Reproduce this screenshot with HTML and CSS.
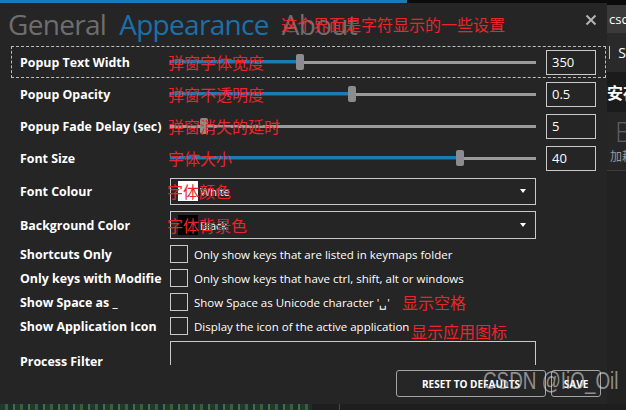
FILE: index.html
```html
<!DOCTYPE html>
<html>
<head>
<meta charset="utf-8">
<link rel="stylesheet" href="styles.css">
</head>
<body>
<div class="topbar"><div class="topbar-blue"></div></div>
<div class="main">
  <div class="dialog">
    <div class="header">
      <span class="tab">General</span>
      <span class="tab active">Appearance</span>
      <span class="tab">About</span>
      <span class="note note-header">这个界面是字符显示的一些设置</span>
      <svg class="close" width="12" height="12" viewBox="0 0 12 12"><path d="M1.5 1.5 L10.5 10.5 M10.5 1.5 L1.5 10.5" stroke="#b4b4b4" stroke-width="2"/></svg>
    </div>
    <div class="content">
      <div class="row focus">
        <div class="label">Popup Text Width</div>
        <div class="control slider">
          <div class="track"><div class="fill" style="width:130px"></div><div class="thumb" style="left:130px"></div></div>
          <span class="note">弹窗字体宽度</span>
        </div>
        <div class="value">350</div>
      </div>
      <div class="row">
        <div class="label">Popup Opacity</div>
        <div class="control slider">
          <div class="track"><div class="fill" style="width:182px"></div><div class="thumb" style="left:182px"></div></div>
          <span class="note">弹窗不透明度</span>
        </div>
        <div class="value">0.5</div>
      </div>
      <div class="row">
        <div class="label">Popup Fade Delay (sec)</div>
        <div class="control slider">
          <div class="track"><div class="thumb" style="left:34px"></div></div>
          <span class="note">弹窗消失的延时</span>
        </div>
        <div class="value">5</div>
      </div>
      <div class="row">
        <div class="label">Font Size</div>
        <div class="control slider">
          <div class="track"><div class="fill" style="width:290px"></div><div class="thumb" style="left:290px"></div></div>
          <span class="note">字体大小</span>
        </div>
        <div class="value">40</div>
      </div>
      <div class="row drop-row">
        <div class="label">Font Colour</div>
        <div class="control">
          <div class="select"><span class="swatch white"></span><span class="sel-text">White</span><span class="arrow"></span></div>
          <span class="note note-drop">字体颜色</span>
        </div>
      </div>
      <div class="row drop-row">
        <div class="label">Background Color</div>
        <div class="control">
          <div class="select tall"><span class="swatch black"></span><span class="sel-text">Black</span><span class="arrow"></span></div>
          <span class="note note-drop">字体背景色</span>
        </div>
      </div>
      <div class="row check-row">
        <div class="label">Shortcuts Only</div>
        <div class="control wide"><span class="box"></span><span class="desc">Only show keys that are listed in keymaps folder</span></div>
      </div>
      <div class="row check-row">
        <div class="label">Only keys with Modifie</div>
        <div class="control wide"><span class="box"></span><span class="desc">Only show keys that have ctrl, shift, alt or windows</span></div>
      </div>
      <div class="row check-row">
        <div class="label">Show Space as _</div>
        <div class="control wide"><span class="box"></span><span class="desc">Show Space as Unicode character '␣'</span><span class="note note-space">显示空格</span></div>
      </div>
      <div class="row check-row">
        <div class="label">Show Application Icon</div>
        <div class="control wide"><span class="box"></span><span class="desc">Display the icon of the active application</span><span class="note note-icon">显示应用图标</span></div>
      </div>
      <div class="row filter-row">
        <div class="label">Process Filter</div>
        <div class="control"><div class="textbox"></div></div>
      </div>
    </div>
    <div class="footer">
      <button class="btn reset">RESET TO DEFAULTS</button>
      <button class="btn save">SAVE</button>
    </div>
  </div>
  <aside class="side">
    <div class="side-top"></div>
    <div class="side-tab">csc</div>
    <div class="side-item"><span class="mark"></span><span>S</span></div>
    <div class="side-title">安存</div>
    <div class="side-card"><span class="big">B</span><span class="small">加耕</span></div>
    <div class="side-rest"></div>
  </aside>
</div>
<div class="bottom"><div class="forest"></div><div class="taskbar"><span class="sep"></span></div></div>
<div class="watermark">CSDN @IiO_Oil</div>
</body>
</html>
```
FILE: styles.css
```css
* { box-sizing: border-box; }
html, body { margin: 0; padding: 0; }
body {
  width: 626px; height: 410px; overflow: hidden;
  background: #252525; position: relative;
  font-family: "Open Sans", "Noto Sans", sans-serif;
  color: #fff;
}
.topbar { height: 3px; background: #0b0b0b; }
.topbar-blue { width: 407px; height: 3px; background: #1a7ab8; }
.main { display: flex; height: 401px; }
.dialog { width: 607px; background: #252525; display: flex; flex-direction: column; position: relative; }
.header { height: 43px; display: flex; align-items: flex-end; padding-left: 8px; padding-bottom: 3px; position: relative; }
.tab { font-size: 28px; font-weight: 400; color: #6e6e6e; line-height: 38px; margin-right: 13px; letter-spacing: -0.7px; }
.tab.active { color: #1c70a8; }
.close { position: absolute; left: 585px; top: 11px; }
.note {
  position: absolute; color: #e8262b;
  font-family: "Noto Sans CJK SC", sans-serif; font-size: 16px; line-height: 18px;
  white-space: nowrap; pointer-events: none;
}
.note-header { left: 281px; top: 12px; }
.content { height: 318px; padding: 0 1px 0 11px; }
.row {
  display: grid; grid-template-columns: 150px 366px 60px;
  align-items: center; height: 32px; padding-left: 8px;
  border: 1px solid transparent;
}
.row.focus { border: 1px dashed #bdbdbd; }
.label { font-weight: 700; font-size: 12.4px; white-space: nowrap; overflow: hidden; letter-spacing: 0; }
.control { position: relative; height: 100%; display: flex; align-items: center; }
.slider .note { left: -2px; top: 6px; }
.track { position: relative; width: 100%; height: 3px; background: #9a9a9a; }
.fill { position: absolute; left: 0; top: -1px; height: 4px; background: #1b7bb4; border-bottom: 1px solid #124f74; }
.thumb { position: absolute; top: -7px; width: 8px; height: 16px; margin-left: -4px; background: #8c8c8c; border-radius: 2px; }
.value {
  margin-left: 10px;
  height: 25px; border: 1px solid #c9c9c9; font-size: 13px; line-height: 23px;
  padding-left: 5px; font-family: "Open Sans", sans-serif;
}
.drop-row { height: 34px; }
.select {
  width: 100%; height: 27px; border: 1px solid #c9c9c9;
  display: flex; align-items: center; padding-left: 7px; padding-right: 9px;
}
.select.tall { height: 28px; }
.swatch { width: 20px; height: 20px; flex: none; }
.swatch.white { background: #fff; }
.swatch.black { background: #000; }
.sel-text { font-size: 11px; margin-left: 2px; flex: 1; }
.arrow { width: 0; height: 0; border-left: 3px solid transparent; border-right: 3px solid transparent; border-top: 4px solid #fff; }
.note-drop { left: -3px; top: 7px; }
.check-row { height: 24px; }
.wide { grid-column: 2 / 4; }
.box { width: 18px; height: 18px; border: 1px solid #c9c9c9; flex: none; }
.desc { font-size: 11.5px; margin-left: 6px; white-space: nowrap; }
.note-space { left: 232px; top: 2px; }
.note-icon { left: 241px; top: 7px; }
.filter-row { height: 30px; align-items: start; }
.filter-row .label { margin-top: 14px; }
.filter-row .control { height: auto; padding-top: 2px; }
.textbox { width: 100%; height: 24px; border: 1px solid #c9c9c9; border-bottom: 0; }
.footer { height: 40px; display: flex; justify-content: flex-end; align-items: flex-start; padding: 6px 6px 0 0; gap: 5px; }
.btn {
  height: 27px; border: 1px solid #a4a4a4; border-radius: 3px; background: #262626;
  color: #fff; font-family: "Open Sans", sans-serif; font-weight: 700; font-size: 10px;
  padding: 0; letter-spacing: 0;
}
.reset { width: 150px; }
.save { width: 50px; }
.side { width: 19px; display: flex; flex-direction: column; overflow: hidden; background: #222; }
.side-top { height: 2px; background: #0b0b0b; }
.side-tab { height: 28px; background: #3a3a3a; font-size: 13px; line-height: 28px; padding-left: 2px; white-space: nowrap; }
.side-item { height: 39px; background: #2a2a2a; display: flex; align-items: center; gap: 8px; padding-left: 2px; font-size: 14px; }
.mark { width: 2px; height: 13px; background: #e8c33a; }
.side-title { height: 40px; background: #1b1b1b; font-family: "Noto Sans CJK SC", sans-serif; font-weight: 700; font-size: 16px; line-height: 40px; white-space: nowrap; }
.side-card { height: 59px; background: #262626; border-bottom: 1px solid #3d3d3d; display: flex; flex-direction: column; padding-left: 3px; white-space: nowrap; }
.big { font-size: 27px; color: #5f5f6a; line-height: 34px; padding-left: 5px; font-family: "Open Sans", sans-serif; font-weight: 300; margin-top: 3px; }
.small { font-size: 12px; color: #9a9a9a; font-family: "Noto Sans CJK SC", sans-serif; line-height: 14px; }
.side-rest { flex: 1; background: #222; }
.bottom { height: 6px; display: flex; }
.forest { width: 312px; background: repeating-linear-gradient(90deg, #1e3a2c 0 5px, #3c5c3a 5px 8px, #16302a 8px 13px, #4a6a48 13px 15px); }
.taskbar { flex: 1; background: #1e1e1e; position: relative; }
.sep { position: absolute; left: 27px; top: 0; width: 1px; height: 6px; background: #4a4a4a; }
.watermark {
  position: absolute; left: 483px; top: 368px;
  font-family: "Liberation Sans", sans-serif; font-size: 23px; color: rgba(215,215,215,0.6);
  white-space: nowrap; transform: scaleX(0.82); transform-origin: left top;
}
```
